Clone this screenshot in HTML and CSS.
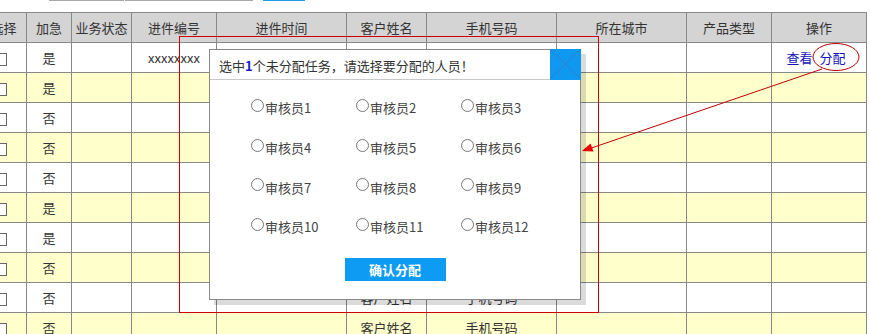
FILE: index.html
```html
<!DOCTYPE html>
<html lang="zh-CN">

<head>
  <meta charset="UTF-8">
  <title>任务分配</title>
  <link rel="stylesheet" href="styles.css">
</head>

<body>
  <div class="toolbar">
    <span class="field field-short"></span>
    <span class="field field-long"></span>
    <span class="search-btn"></span>
  </div>

  <div class="grid-wrap">
    <table class="grid">
      <colgroup>
        <col style="width: 46px">
        <col style="width: 45px">
        <col style="width: 60px">
        <col style="width: 85px">
        <col style="width: 130px">
        <col style="width: 80px">
        <col style="width: 130px">
        <col style="width: 130px">
        <col style="width: 85px">
        <col style="width: 95px">
      </colgroup>
      <thead>
        <tr>
          <th>选择</th>
          <th>加急</th>
          <th>业务状态</th>
          <th>进件编号</th>
          <th>进件时间</th>
          <th>客户姓名</th>
          <th>手机号码</th>
          <th>所在城市</th>
          <th>产品类型</th>
          <th>操作</th>
        </tr>
      </thead>
      <tbody>
        <tr>
          <td><input type="checkbox" class="check"></td>
          <td>是</td>
          <td></td>
          <td>xxxxxxxx</td>
          <td></td>
          <td></td>
          <td></td>
          <td></td>
          <td></td>
          <td class="ops"><a href="#">查看</a><a href="#">分配</a></td>
        </tr>
        <tr class="alt">
          <td><input type="checkbox" class="check"></td>
          <td>是</td>
          <td></td><td></td><td></td><td></td><td></td><td></td><td></td><td></td>
        </tr>
        <tr>
          <td><input type="checkbox" class="check"></td>
          <td>否</td>
          <td></td><td></td><td></td><td></td><td></td><td></td><td></td><td></td>
        </tr>
        <tr class="alt">
          <td><input type="checkbox" class="check"></td>
          <td>否</td>
          <td></td><td></td><td></td><td></td><td></td><td></td><td></td><td></td>
        </tr>
        <tr>
          <td><input type="checkbox" class="check"></td>
          <td>否</td>
          <td></td><td></td><td></td><td></td><td></td><td></td><td></td><td></td>
        </tr>
        <tr class="alt">
          <td><input type="checkbox" class="check"></td>
          <td>是</td>
          <td></td><td></td><td></td><td></td><td></td><td></td><td></td><td></td>
        </tr>
        <tr>
          <td><input type="checkbox" class="check"></td>
          <td>是</td>
          <td></td><td></td><td></td><td></td><td></td><td></td><td></td><td></td>
        </tr>
        <tr class="alt">
          <td><input type="checkbox" class="check"></td>
          <td>否</td>
          <td></td><td></td><td></td><td></td><td></td><td></td><td></td><td></td>
        </tr>
        <tr>
          <td><input type="checkbox" class="check"></td>
          <td>否</td>
          <td></td><td></td><td></td>
          <td>客户姓名</td>
          <td>手机号码</td>
          <td></td><td></td><td></td>
        </tr>
        <tr class="alt">
          <td><input type="checkbox" class="check"></td>
          <td>否</td>
          <td></td><td></td><td></td>
          <td>客户姓名</td>
          <td>手机号码</td>
          <td></td><td></td><td></td>
        </tr>
      </tbody>
    </table>
  </div>

  <!-- 标注：红框、圈和箭头 -->
  <div class="mark-box"></div>
  <svg class="annot" width="870" height="334" viewBox="0 0 870 334">
    <ellipse cx="836" cy="57" rx="23" ry="13.5" fill="none" stroke="#b40000" stroke-width="1" />
    <line x1="822" y1="69" x2="590" y2="148.5" stroke="#c00000" stroke-width="1" />
    <polygon points="582,151 593.5,151.5 590.5,143.5" fill="#f00000" />
  </svg>

  <div class="dialog">
    <div class="dialog-head">
      选中<b class="count">1</b>个未分配任务，请选择要分配的人员！
      <a href="#" class="dialog-close">
        <svg width="31" height="30" viewBox="0 0 31 30">
          <line x1="0" y1="0" x2="31" y2="30" stroke="#2f82c8" stroke-width="1" />
          <line x1="31" y1="0" x2="0" y2="30" stroke="#2f82c8" stroke-width="1" />
        </svg>
      </a>
    </div>
    <div class="dialog-body">
      <div class="auditors">
        <label class="auditor"><input type="radio" name="auditor" class="radio">审核员1</label>
        <label class="auditor"><input type="radio" name="auditor" class="radio">审核员2</label>
        <label class="auditor"><input type="radio" name="auditor" class="radio">审核员3</label>
        <label class="auditor"><input type="radio" name="auditor" class="radio">审核员4</label>
        <label class="auditor"><input type="radio" name="auditor" class="radio">审核员5</label>
        <label class="auditor"><input type="radio" name="auditor" class="radio">审核员6</label>
        <label class="auditor"><input type="radio" name="auditor" class="radio">审核员7</label>
        <label class="auditor"><input type="radio" name="auditor" class="radio">审核员8</label>
        <label class="auditor"><input type="radio" name="auditor" class="radio">审核员9</label>
        <label class="auditor"><input type="radio" name="auditor" class="radio">审核员10</label>
        <label class="auditor"><input type="radio" name="auditor" class="radio">审核员11</label>
        <label class="auditor"><input type="radio" name="auditor" class="radio">审核员12</label>
      </div>
      <div class="dialog-foot">
        <button class="confirm-btn">确认分配</button>
      </div>
    </div>
  </div>
</body>

</html>
```

FILE: styles.css
```css
* {
  margin: 0;
  padding: 0;
  box-sizing: border-box;
}

body {
  font-family: 'Noto Sans CJK SC', 'Liberation Sans', sans-serif;
  font-size: 13px;
  color: #333;
  background: #fff;
  width: 870px;
  height: 334px;
  overflow: hidden;
  position: relative;
}

/* 顶部搜索栏（只露出底边） */
.toolbar {
  display: flex;
  align-items: flex-end;
  height: 1px;
  margin-bottom: 11px;
}

.field {
  display: block;
  height: 24px;
  border: 1px solid #a8a8a8;
  background: #fff;
}

.field-short {
  width: 75px;
  margin-left: 49px;
}

.field-long {
  width: 128px;
  margin-left: 1px;
}

.search-btn {
  display: block;
  width: 42px;
  height: 24px;
  margin-left: 10px;
  background: #1e9be9;
}

/* 表格 */
.grid-wrap {
  margin-left: -20px;
}

.grid {
  border-collapse: collapse;
  table-layout: fixed;
  width: 887px;
}

.grid th,
.grid td {
  border: 1px solid #888;
  height: 30px;
  padding: 0;
  text-align: center;
  vertical-align: middle;
  font-weight: normal;
  white-space: nowrap;
  overflow: hidden;
}

.grid th {
  background: #d4d4d4;
}

.grid tr.alt td {
  background: #ffffcc;
}

.check {
  appearance: none;
  display: inline-block;
  width: 13px;
  height: 13px;
  border: 1px solid #666;
  background: #fff;
  vertical-align: middle;
  margin-right: 6px;
}

.grid td.ops {
  padding-right: 6px;
}

.ops a {
  color: #1414b8;
  text-decoration: none;
}

.ops a + a {
  margin-left: 7px;
}

/* 标注 */
.mark-box {
  position: absolute;
  left: 179px;
  top: 36px;
  width: 420px;
  height: 277px;
  border: 1px solid #cc0000;
}

.annot {
  position: absolute;
  left: 0;
  top: 0;
}

/* 分配弹窗 */
.dialog {
  position: absolute;
  left: 209px;
  top: 49px;
  width: 372px;
  height: 251px;
  background: #fff;
  border: 1px solid #8a8a8a;
  box-shadow: 5px 5px 0 rgba(0, 0, 0, 0.14);
}

.dialog-head {
  position: relative;
  height: 30px;
  line-height: 32px;
  padding-left: 9px;
  border-bottom: 1px solid #c8c8c8;
}

.count {
  color: #1a1ad0;
}

.dialog-close {
  position: absolute;
  top: -1px;
  right: -1px;
  width: 31px;
  height: 31px;
  background: #0e98f0;
  display: block;
}

.dialog-close svg {
  display: block;
}

.dialog-body {
  padding: 8px 0 0 41px;
}

.auditors {
  display: grid;
  grid-template-columns: repeat(3, 105px);
  grid-auto-rows: 39.7px;
}

.auditor {
  display: flex;
  align-items: center;
  color: #444;
}

.radio {
  appearance: none;
  width: 13px;
  height: 13px;
  border: 1px solid #777;
  border-radius: 50%;
  background: #fff;
  margin: 0 1px 5px 0;
}

.dialog-foot {
  display: flex;
  justify-content: center;
  margin: 11px 0 0 -41px;
}

.confirm-btn {
  width: 101px;
  height: 23px;
  border: none;
  background: #0d9bf3;
  color: #fff;
  font-family: inherit;
  font-size: 13px;
  font-weight: bold;
}
```
